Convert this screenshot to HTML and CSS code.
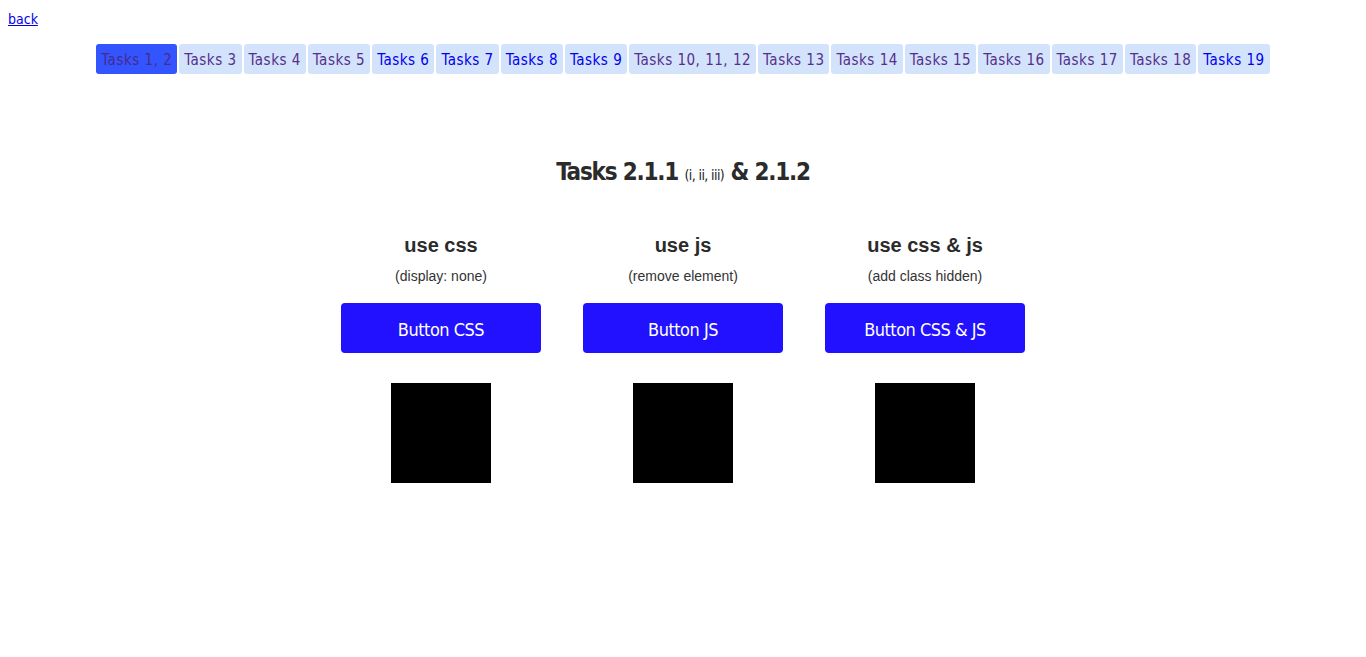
FILE: index.html
```html
<!DOCTYPE html>
<html>
<head>
<meta charset="utf-8">
<link rel="stylesheet" href="styles.css">
</head>
<body>
<a class="back" href="#">back</a>
<nav class="tabs">
  <a class="tab active" href="#">Tasks 1, 2</a>
  <a class="tab visited" href="#">Tasks 3</a>
  <a class="tab visited" href="#">Tasks 4</a>
  <a class="tab visited" href="#">Tasks 5</a>
  <a class="tab" href="#">Tasks 6</a>
  <a class="tab" href="#">Tasks 7</a>
  <a class="tab" href="#">Tasks 8</a>
  <a class="tab" href="#">Tasks 9</a>
  <a class="tab visited" href="#">Tasks 10, 11, 12</a>
  <a class="tab visited" href="#">Tasks 13</a>
  <a class="tab visited" href="#">Tasks 14</a>
  <a class="tab visited" href="#">Tasks 15</a>
  <a class="tab visited" href="#">Tasks 16</a>
  <a class="tab visited" href="#">Tasks 17</a>
  <a class="tab visited" href="#">Tasks 18</a>
  <a class="tab" href="#">Tasks 19</a>
</nav>
<h1 class="title">Tasks 2.1.1 <small>(i, ii, iii)</small> &amp; 2.1.2</h1>
<main class="cols">
  <section class="col">
    <h3>use css</h3>
    <p>(display: none)</p>
    <button class="btn">Button CSS</button>
    <div class="box"></div>
  </section>
  <section class="col">
    <h3>use js</h3>
    <p>(remove element)</p>
    <button class="btn">Button JS</button>
    <div class="box"></div>
  </section>
  <section class="col">
    <h3>use css &amp; js</h3>
    <p>(add class hidden)</p>
    <button class="btn">Button CSS &amp; JS</button>
    <div class="box"></div>
  </section>
</main>
</body>
</html>
```
FILE: styles.css
```css
body {
  margin: 8px;
  font-family: "DejaVu Sans Condensed", "DejaVu Sans", sans-serif;
  color: #333;
}
.back {
  display: inline-block;
  font-size: 14px;
  color: #0000ee;
  line-height: 20px;
  margin-top: 1px;
}
.tabs {
  display: flex;
  justify-content: center;
  gap: 2px;
  margin-top: 15px;
}
.tab {
  display: block;
  background: #d4e3fc;
  color: #0000ee;
  text-decoration: none;
  font-size: 15px;
  line-height: 28px;
  padding: 2px 5px 0;
  border-radius: 3px;
  letter-spacing: 0.5px;
}
.tab.visited { color: #55308b; }
.tab.active { background: #3355ff; color: #4a2a8b; }
.title {
  text-align: center;
  font-size: 24px;
  font-weight: bold;
  color: #2b2b2b;
  margin: 81px 0 0;
  line-height: 34px;
  letter-spacing: -1.2px;
}
.title small { font-size: 14px; font-weight: normal; letter-spacing: -0.6px; color: #222; }
.cols {
  display: flex;
  justify-content: center;
  gap: 42px;
  margin-top: 41px;
}
.col {
  width: 200px;
  display: flex;
  flex-direction: column;
  align-items: center;
}
.col h3 {
  font-family: "Liberation Sans", Arial, sans-serif;
  font-size: 20px;
  font-weight: bold;
  margin: 0;
  line-height: 24px;
  color: #2b2b2b;
}
.col p {
  font-family: "Liberation Sans", Arial, sans-serif;
  font-size: 14px;
  margin: 11px 0 0;
  line-height: 16px;
  color: #333;
}
.btn {
  margin-top: 19px;
  width: 200px;
  height: 50px;
  border: none;
  border-radius: 4px;
  background: #2211ff;
  color: #fff;
  font-family: "DejaVu Sans Condensed", "DejaVu Sans", sans-serif;
  font-size: 18px;
  letter-spacing: -0.5px;
  padding: 2px 0 0;
}
.box {
  width: 100px;
  height: 100px;
  background: #000;
  margin-top: 30px;
}
```
